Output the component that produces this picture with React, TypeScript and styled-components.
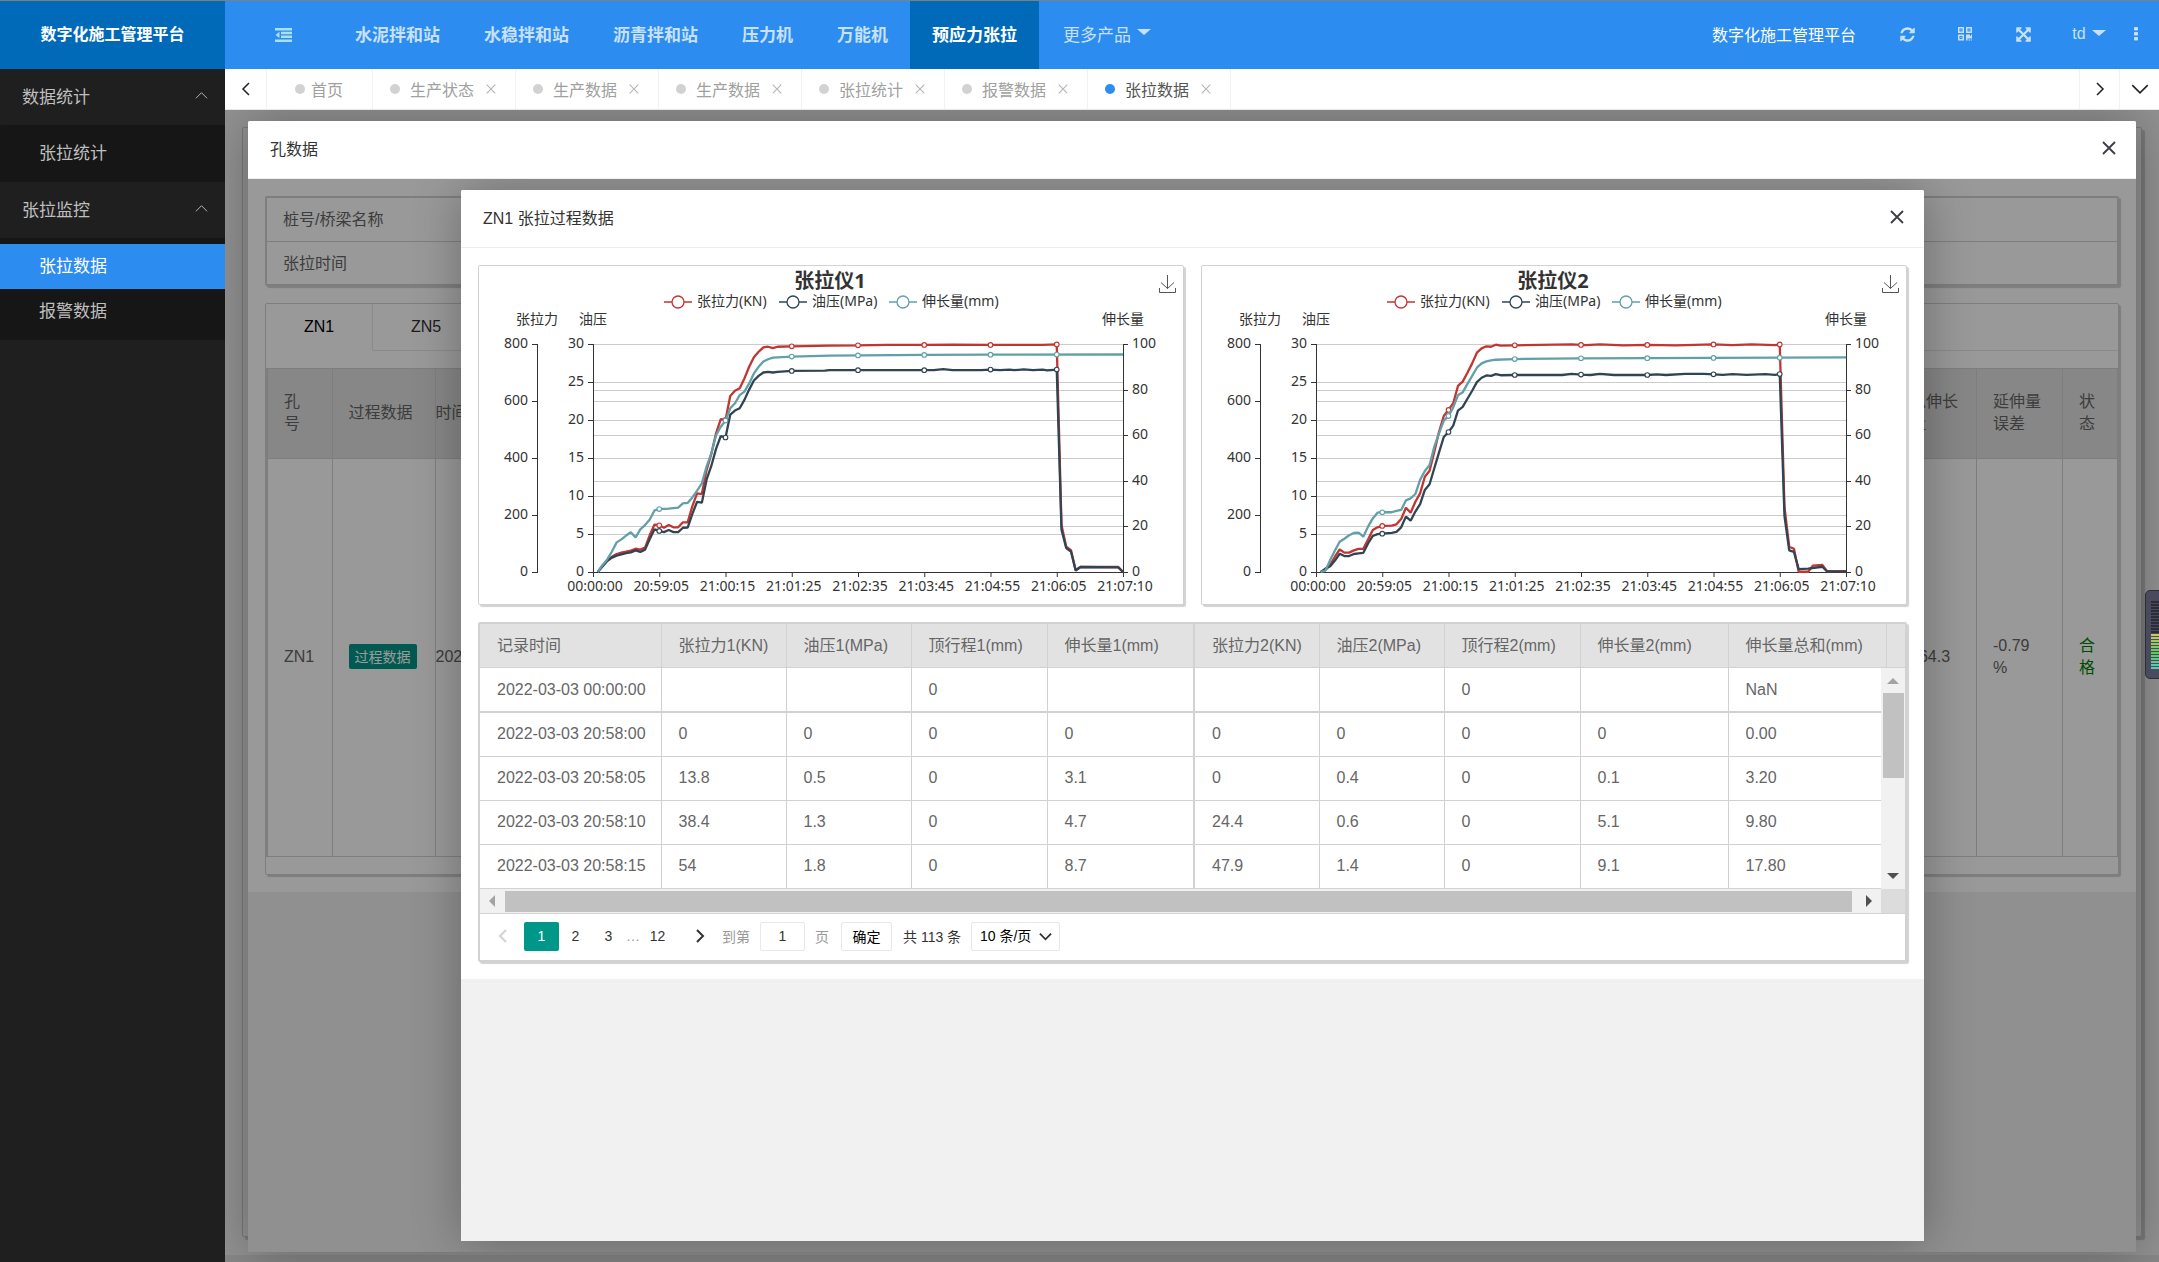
import React from "react";
import styled, { createGlobalStyle } from "styled-components";

const GlobalStyle = createGlobalStyle`
  * { box-sizing: border-box; }
  body { margin: 0; }
  body, button, input, select {
    font-family: "Liberation Sans", "Noto Sans CJK SC", sans-serif;
  }
  a { color: inherit; text-decoration: none; }
  button { margin: 0; padding: 0; border: 0; background: none; color: inherit; cursor: pointer; }
  h2, p, ul { margin: 0; padding: 0; }
  ul { list-style: none; }
  table { border-collapse: collapse; border-spacing: 0; }
  svg { display: block; }
`;

/* ---------- shell ---------- */

const Shell = styled.div`
  display: flex;
  height: 100vh;
  border-top: 1px solid #7f7f7f;
  overflow: hidden;
`;

const Sidebar = styled.aside`
  flex: 0 0 225px;
  background: #1f1f1f;
  color: #bfbfbf;
  font-size: 17px;
`;

const Logo = styled.div`
  display: flex;
  align-items: center;
  justify-content: center;
  height: 68px;
  padding-bottom: 4px;
  background: #006ab8;
  color: #fff;
  font-size: 16px;
  font-weight: 700;
`;

const GroupTitle = styled.button`
  display: flex;
  align-items: center;
  justify-content: space-between;
  width: 100%;
  height: 56px;
  padding: 0 17px 4px 22px;
  font-size: 17px;
`;

const SubMenu = styled.ul`
  padding: 6px 0;
  border-radius: 2px;
  background: #161616;
`;

const SubLink = styled.a<{ $active?: boolean }>`
  display: flex;
  align-items: center;
  height: 45px;
  padding: 0 39px 4px;
  background: ${(p) => (p.$active ? "#2d8cf0" : "transparent")};
  color: ${(p) => (p.$active ? "#fff" : "inherit")};
`;

const Column = styled.div`
  display: flex;
  flex: 1;
  flex-direction: column;
  min-width: 0;
`;

const TopBar = styled.header`
  display: flex;
  flex: 0 0 68px;
  background: #2d8cf0;
  color: #c7e1fb;
`;

const MenuToggle = styled.button`
  display: flex;
  align-items: center;
  justify-content: center;
  width: 108px;
  padding-left: 8px;
  color: #a9e0ea;
`;

const TopNav = styled.nav`
  display: flex;
  flex: 1;
`;

const TopLink = styled.a<{ $active?: boolean; $more?: boolean }>`
  display: flex;
  align-items: center;
  gap: 6px;
  padding: 0 ${(p) => (p.$more ? 24 : 22)}px 4px;
  background: ${(p) => (p.$active ? "#006ab8" : "transparent")};
  color: ${(p) => (p.$active ? "#fff" : "inherit")};
  font-size: 17px;
  font-weight: ${(p) => (p.$more ? 400 : 700)};
`;

const TopTools = styled.div`
  display: flex;
  align-items: center;
  padding: 0 13px 2px 0;
`;

const TopTitle = styled.span`
  margin-right: 22px;
  color: #fff;
  font-size: 16px;
`;

const ToolButton = styled.button<{ $wide?: boolean }>`
  display: flex;
  align-items: center;
  justify-content: center;
  gap: 6px;
  width: ${(p) => (p.$wide ? "74px" : "58px")};
  height: 66px;
  font-size: 16px;
`;

const MoreButton = styled.button`
  display: flex;
  align-items: center;
  justify-content: center;
  width: 20px;
  height: 66px;
`;

const Caret = styled.span`
  border: 7px solid transparent;
  border-top: 6px solid currentColor;
  border-bottom: 0;
  margin-bottom: 2px;
`;

const TabBar = styled.div`
  display: flex;
  flex: 0 0 41px;
  border-bottom: 1px solid #e8e8e8;
  background: #fff;
  color: #a0a0a0;
`;

const TabArrow = styled.button<{ $side: "left" | "right" }>`
  display: flex;
  align-items: center;
  justify-content: center;
  width: ${(p) => (p.$side === "left" ? 42 : 40)}px;
  border-${(p) => (p.$side === "left" ? "right" : "left")}: 1px solid #f2f2f2;
  color: #222;
`;

const TabList = styled.div`
  display: flex;
  flex: 1;
`;

const Tab = styled.div<{ $home?: boolean; $active?: boolean }>`
  display: flex;
  align-items: center;
  gap: ${(p) => (p.$home ? 6 : 10)}px;
  padding: ${(p) => (p.$home ? "0 29px 0 28px" : "0 19px 0 17px")};
  border-right: 1px solid #f2f2f2;
  color: ${(p) => (p.$active ? "#555" : "inherit")};
  font-size: 16px;
`;

const Dot = styled.span<{ $active?: boolean }>`
  width: 10px;
  height: 10px;
  border-radius: 50%;
  background: ${(p) => (p.$active ? "#2d8cf0" : "#d2d2d2")};
`;

const TabClose = styled.button`
  display: flex;
  margin-left: 2px;
  color: #b4b4b4;
`;

const Main = styled.main`
  display: flex;
  position: relative;
  flex: 1;
  flex-direction: column;
  min-height: 0;
  overflow: hidden;
  background: #f2f2f2;
`;

const PageCard = styled.section`
  flex: 1;
  margin: 17px 17px 18px;
  border: 1px solid #c8c8c8;
  border-radius: 2px;
  background: #f2f2f2;
  box-shadow: 3px 3px 1px #c8c8c8;
`;

const PageFoot = styled.div`
  flex: 0 0 7px;
  background: #e2e2e2;
`;

/* ---------- dialogs ---------- */

const Shade = styled.div`
  position: absolute;
  inset: 0;
  background: rgba(0, 0, 0, 0.4);
`;

const Dialog = styled.section<{ $inset: string }>`
  display: flex;
  position: absolute;
  inset: ${(p) => p.$inset};
  flex-direction: column;
  border-radius: 2px;
  background: #f1f1f1;
  box-shadow: 1px 1px 50px rgba(0, 0, 0, 0.3);
`;

const DialogHead = styled.header`
  display: flex;
  flex: 0 0 58px;
  align-items: center;
  justify-content: space-between;
  padding: 0 20px 4px 22px;
  border-bottom: 1px solid #eee;
  border-radius: 2px 2px 0 0;
  background: #fff;
  color: #333;
`;

const DialogTitle = styled.h2`
  font-size: 16px;
  font-weight: 400;
`;

const DialogClose = styled.button`
  color: #3c3c48;
`;

const DialogBody = styled.div`
  position: relative;
  flex: 1;
  min-height: 0;
  overflow: hidden;
  background: #f1f1f1;
`;

const Sheet = styled.div`
  display: flex;
  flex-direction: column;
  gap: 17px;
  padding: 17px;
  background: #fff;
`;

const Card = styled.section<{ $thick?: boolean }>`
  position: relative;
  border: ${(p) => (p.$thick ? "2px" : "1px")} solid #d2d2d2;
  border-radius: 2px;
  background: #fff;
  box-shadow: 2px 2px 1px #d2d2d2;
`;

/* ---------- hole data dialog ---------- */

const InfoTable = styled.table`
  width: 100%;
  color: #666;
  font-size: 16px;
  text-align: left;

  tr + tr { border-top: 1px solid #d2d2d2; }
  th { width: 200px; height: 43px; padding: 0 16px 2px; font-weight: 400; }
`;

const HoleTabs = styled.div`
  display: flex;
  height: 47px;
  margin-bottom: 17px;
`;

const HoleTab = styled.button<{ $active?: boolean }>`
  width: 107px;
  border-right: 1px solid ${(p) => (p.$active ? "#e6e6e6" : "transparent")};
  border-bottom: 1px solid ${(p) => (p.$active ? "transparent" : "#e6e6e6")};
  color: ${(p) => (p.$active ? "#000" : "#333")};
  font-size: 16px;
`;

const HoleTabRest = styled.div`
  flex: 1;
  border-bottom: 1px solid #e6e6e6;
`;

const HoleTable = styled.table`
  width: 100%;
  margin-bottom: 17px;
  table-layout: fixed;
  color: #666;
  font-size: 16px;
  line-height: 22px;
  text-align: left;

  th, td {
    padding: 0 16px 2px;
    border: 1px solid #d2d2d2;
    font-weight: 400;
  }
  tr > :first-child { border-left-width: 2px; }
  th { height: 90px; background: #e2e2e2; }
  td { height: 398px; }
  tr > .time { padding: 0 0 2px; }
`;

const Passed = styled.span`
  color: green;
`;

const ProcessButton = styled.button`
  width: 68px;
  height: 25px;
  padding-bottom: 2px;
  border-radius: 2px;
  background: #009688;
  color: #fff;
  font-size: 14px;
`;

/* ---------- charts ---------- */

const ChartRow = styled.div`
  display: grid;
  grid-template-columns: 1fr 1fr;
  gap: 17px;
`;

const ChartSvg = styled.svg`
  width: 100%;
  height: auto;
  font-family: "Noto Sans", "Noto Sans CJK SC", sans-serif;
  font-size: 14px;
  fill: #333;
`;

const SaveButton = styled.button`
  position: absolute;
  top: 9px;
  right: 7px;
`;

type Points = [number, number][];

const GRID = { left: 114, right: 644, top: 78, bottom: 306, steps: 112 };
const px = (i: number) => GRID.left + ((GRID.right - GRID.left) * i) / GRID.steps;
const py = (pct: number) => GRID.bottom - ((GRID.bottom - GRID.top) * pct) / 100;

const COLORS = { force: "#c23531", oil: "#2f4554", stretch: "#61a0a8" };

const times = ["00:00:00", "20:59:05", "21:00:15", "21:01:25", "21:02:35", "21:03:45", "21:04:55", "21:06:05", "21:07:10"];

const valueAt = (points: Points, i: number) => {
  const next = points.findIndex((p) => p[0] >= i);
  const [x1, y1] = points[next];
  if (x1 === i) return y1;
  const [x0, y0] = points[next - 1];
  return y0 + ((y1 - y0) * (i - x0)) / (x1 - x0);
};

const gauge1: Record<keyof typeof COLORS, Points> = {
  force: [[1, 0], [2, 2.6], [3, 5], [4, 6.7], [5, 7.9], [6, 8.5], [7, 8.9], [8, 9.4], [9, 10.2], [10, 9.8], [11, 10.7], [12, 16.2], [13, 20.8], [14, 20.5], [15, 19.4], [16, 20.6], [17, 19.6], [18, 19.6], [19, 21.8], [20, 21.8], [21, 28.9], [22, 34.5], [23, 34.2], [24, 44.7], [25, 51.8], [26, 60.8], [27, 67], [28, 66.7], [29, 77.2], [30, 79.5], [31, 80.6], [32, 84.9], [33, 90], [34, 94.2], [35, 96.6], [36, 98.5], [37, 98.8], [38, 98.2], [39, 98.8], [42, 99], [50, 99.3], [56, 99.4], [62, 99.6], [70, 99.6], [76, 99.7], [84, 99.6], [91, 99.6], [95, 99.6], [98, 99.8], [99, 20.6], [100, 11.1], [101, 9.6], [102, 0.6], [103, 2.2], [111, 2.2], [112, 0]],
  oil: [[1, 0], [2, 2.4], [3, 4.8], [4, 6.3], [5, 7.2], [6, 7.7], [7, 8.3], [8, 8.6], [9, 9.5], [10, 8.8], [11, 9.8], [12, 14.5], [13, 18.7], [14, 18], [15, 17.5], [16, 18.4], [17, 17.5], [18, 17.5], [19, 19.4], [20, 19.5], [21, 25.5], [22, 30.8], [23, 30.4], [24, 40.5], [25, 46.5], [26, 54], [27, 59.6], [28, 59], [29, 69], [30, 70.8], [31, 71.8], [32, 75.5], [33, 80], [34, 84], [35, 86], [36, 87.5], [37, 87.8], [38, 87.5], [39, 87.8], [42, 88.2], [49, 88.3], [50, 88.5], [72, 88.5], [74, 89], [76, 88.5], [82, 88.5], [84, 88.8], [86, 88.5], [88, 88.8], [89, 88.5], [91, 88.9], [93, 88.5], [95, 88.8], [96, 88.4], [98, 88.8], [99, 18.5], [100, 10.5], [101, 9], [102, 0.8], [103, 2.2], [111, 2], [112, 0]],
  stretch: [[1, 0], [2, 3], [3, 5.5], [4, 9], [5, 13], [6, 14.3], [7, 16], [8, 17.4], [9, 15.2], [10, 18.7], [11, 20.6], [12, 23], [13, 27], [14, 27.6], [16, 27.8], [18, 28.2], [19, 30.1], [20, 30.3], [21, 32.7], [22, 35.7], [23, 38.9], [24, 46.2], [25, 52], [26, 60], [27, 63.7], [28, 66.4], [29, 71.8], [30, 74], [31, 77.6], [32, 79.1], [33, 82.7], [34, 87.1], [35, 90], [36, 92.3], [37, 93.3], [38, 94], [42, 94.5], [50, 94.9], [70, 95.2], [84, 95.3], [112, 95.4]],
};

const gauge2: Record<keyof typeof COLORS, Points> = {
  force: [[1, 0], [2, 0.9], [3, 3.1], [4, 6.7], [5, 9.9], [6, 8.5], [7, 8.5], [8, 9.5], [9, 10.1], [10, 10.2], [11, 14.3], [12, 18.4], [13, 19.6], [14, 20.2], [16, 20.3], [17, 20.9], [18, 23.2], [19, 28.2], [20, 26], [21, 30.8], [22, 34.5], [23, 41.8], [24, 44.4], [25, 52.8], [26, 61.5], [27, 68.4], [28, 71.1], [29, 74], [30, 81.6], [31, 83.5], [32, 87.4], [33, 91.5], [34, 96.2], [35, 98.1], [36, 99], [37, 98.8], [38, 99.7], [39, 99.3], [42, 99.4], [54, 99.8], [57, 99.5], [60, 99.8], [65, 99.4], [70, 99.6], [76, 99.4], [84, 99.8], [88, 99.5], [92, 99.8], [97, 99.5], [98, 99.8], [99, 28.4], [100, 11.1], [101, 10.2], [102, 0.1], [104, 0.1], [105, 2.8], [107, 3.1], [108, 0.4], [112, 0.4]],
  oil: [[1, 0], [2, 1.5], [3, 2.5], [4, 5], [5, 8], [6, 7], [7, 7], [8, 7.9], [9, 8.2], [10, 8.4], [11, 12.5], [12, 15.8], [13, 16.6], [14, 16.8], [16, 17.2], [17, 17.6], [18, 19.6], [19, 24.3], [20, 22.5], [21, 26.5], [22, 29.8], [23, 36], [24, 38.5], [25, 45.5], [26, 52.5], [27, 59.2], [28, 61.4], [29, 64.2], [30, 70.8], [31, 72.4], [32, 76], [33, 79.5], [34, 83.3], [35, 85.2], [36, 86.2], [37, 86], [38, 86.8], [39, 86.3], [42, 86.4], [52, 86.4], [54, 86.9], [56, 86.6], [58, 86.4], [60, 86.9], [63, 86.4], [70, 86.4], [72, 86.7], [74, 86.4], [78, 86.9], [82, 86.9], [86, 86.5], [88, 86.8], [91, 86.5], [95, 86.8], [97, 86.5], [98, 86.8], [99, 24.5], [100, 9.5], [101, 8.8], [102, 1.3], [104, 1.5], [107, 2.3], [108, 0.2], [112, 0.2]],
  stretch: [[1, 0], [2, 0.6], [3, 5.3], [4, 9.4], [5, 13.3], [6, 14.6], [7, 16.1], [8, 17.1], [9, 17.3], [10, 15.5], [11, 19.9], [12, 23.5], [13, 26], [14, 26.2], [15, 26.3], [16, 26.2], [17, 26.8], [18, 27.2], [19, 31.4], [20, 32.3], [21, 34.2], [22, 40.4], [23, 44.3], [24, 46.9], [25, 55], [26, 60.8], [27, 66.4], [28, 68.4], [29, 72.2], [30, 77.5], [31, 78.8], [32, 82.5], [33, 86], [34, 89.6], [35, 91.5], [36, 92.4], [37, 92.8], [38, 93.1], [42, 93.4], [56, 93.7], [112, 94.1]],
};

const legend: { key: keyof typeof COLORS; label: string; x: number }[] = [
  { key: "force", label: "张拉力(KN)", x: 185 },
  { key: "oil", label: "油压(MPa)", x: 300 },
  { key: "stretch", label: "伸长量(mm)", x: 410 },
];

const axes = [
  { x: 58, name: "张拉力", max: 800, step: 200, side: -1 },
  { x: GRID.left, name: "油压", max: 30, step: 5, side: -1 },
  { x: GRID.right, name: "伸长量", max: 100, step: 20, side: 1 },
];

const ticksOf = (max: number, step: number) =>
  Array.from({ length: max / step + 1 }, (_, i) => i * step);

function Chart({ title, data }: { title: string; data: typeof gauge1 }) {
  return (
    <Card>
      <ChartSvg viewBox="0 0 704 338" role="img" aria-label={title}>
        <text x="351" y="22" textAnchor="middle" fontSize="20" fontWeight="700">{title}</text>
        {legend.map((l) => (
          <g key={l.key} stroke={COLORS[l.key]}>
            <line x1={l.x} x2={l.x + 28} y1="36" y2="36" strokeWidth="1.5" />
            <circle cx={l.x + 14} cy="36" r="6" fill="#fff" strokeWidth="1.3" />
            <text x={l.x + 33} y="40" stroke="none">{l.label}</text>
          </g>
        ))}
        {axes.map((a) => (
          <g key={a.name}>
            {ticksOf(a.max, a.step).map((v) => (
              <line key={v} x1={GRID.left} x2={GRID.right} y1={Math.round(py((v / a.max) * 100)) + 0.5} y2={Math.round(py((v / a.max) * 100)) + 0.5} stroke="#ccc" />
            ))}
          </g>
        ))}
        {axes.map((a) => (
          <g key={a.name}>
            <text x={a.x} y="58" textAnchor="middle">{a.name}</text>
            <line x1={a.x + 0.5} x2={a.x + 0.5} y1={GRID.top} y2={GRID.bottom + 1} stroke="#333" />
            {ticksOf(a.max, a.step).map((v) => {
              const y = Math.round(py((v / a.max) * 100)) + 0.5;
              return (
                <g key={v}>
                  <line x1={a.x} x2={a.x + a.side * 5} y1={y} y2={y} stroke="#333" />
                  <text x={a.x + a.side * 9} y={y + 3} textAnchor={a.side < 0 ? "end" : "start"}>{v}</text>
                </g>
              );
            })}
          </g>
        ))}
        <line x1={GRID.left} x2={GRID.right} y1={GRID.bottom + 0.5} y2={GRID.bottom + 0.5} stroke="#333" />
        {times.map((t, i) => {
          const x = px(i * 14);
          return (
            <g key={t}>
              <line x1={x + 0.5} x2={x + 0.5} y1={GRID.bottom} y2={GRID.bottom + 5} stroke="#333" />
              <text x={x + 2} y={GRID.bottom + 19} textAnchor="middle">{t}</text>
            </g>
          );
        })}
        {legend.map(({ key }) => (
          <g key={key} stroke={COLORS[key]}>
            <polyline points={data[key].map(([i, v]) => `${px(i)},${py(v)}`).join(" ")} fill="none" strokeWidth="2.3" strokeLinejoin="bevel" />
            {[14, 28, 42, 56, 70, 84, 98].map((i) => (
              <circle key={i} cx={px(i)} cy={py(valueAt(data[key], i))} r="2.3" fill="#fff" strokeWidth="1.1" />
            ))}
          </g>
        ))}
      </ChartSvg>
      <SaveButton aria-label="保存为图片">
        <svg width="17" height="18" viewBox="0 0 17 18" fill="none" stroke="#555">
          <path d="M8.500 0v13.500M2 7.500l6.500 6 6.500-6M.5 13v4.500h16V13" />
        </svg>
      </SaveButton>
    </Card>
  );
}

/* ---------- record table ---------- */

const RecordArea = styled.div`
  display: grid;
  grid-template-columns: minmax(0, 1fr) 24px;
  grid-template-rows: 44px 221px 24px;
  border-bottom: 1px solid #d2d2d2;
`;

const HeadViewport = styled.div`
  grid-column: 1 / 3;
  overflow: hidden;
  border-bottom: 1px solid #d2d2d2;
  background: #e2e2e2;
`;

const BodyViewport = styled.div`
  overflow: hidden;
`;

const RecordTable = styled.table`
  width: 1406px;
  table-layout: fixed;
  color: #666;
  font-size: 16px;
  text-align: left;

  th, td {
    height: 44px;
    padding: 0 0 0 17px;
    border-right: 1px solid #d2d2d2;
    border-bottom: 1px solid #d2d2d2;
    font-weight: 400;
    white-space: nowrap;
  }
  th { height: 43px; padding-bottom: 3px; border-bottom: 0; }
  tbody tr:first-child td { border-bottom-width: 2px; }
  tr > :nth-child(5) { border-right-width: 2px; }
`;

const VScroll = styled.div`
  display: flex;
  flex-direction: column;
  align-items: center;
  justify-content: space-between;
  padding: 10px 0;
  background: #f1f1f1;
`;

const VThumb = styled.div`
  width: 21px;
  height: 85px;
  margin: 9px 0 auto;
  background: #c1c1c1;
`;

const HScroll = styled.div`
  display: flex;
  align-items: center;
  padding: 0 9px;
  background: #f1f1f1;
`;

const HThumb = styled.div`
  flex: 1;
  height: 21px;
  margin: 0 14px 0 10px;
  background: #c1c1c1;
`;

const Arrow = styled.span<{ $dir: "up" | "down" | "left" | "right" }>`
  border: 6px solid transparent;
  ${(p) => p.$dir === "up" && "border-top: 0; border-bottom-color: #a3a3a3;"}
  ${(p) => p.$dir === "down" && "border-bottom: 0; border-top-color: #505050;"}
  ${(p) => p.$dir === "left" && "border-left: 0; border-right-color: #a3a3a3;"}
  ${(p) => p.$dir === "right" && "border-right: 0; border-left-color: #505050;"}
`;

const Corner = styled.div`
  background: #dcdcdc;
`;

const Pager = styled.nav`
  display: flex;
  align-items: center;
  height: 46px;
  padding: 0 0 2px 6px;
  color: #333;
  font-size: 14px;
`;

const PageButton = styled.button<{ $current?: boolean; $step?: "prev" | "next" }>`
  display: flex;
  align-items: center;
  justify-content: center;
  width: ${(p) => (p.$current ? 35 : 33)}px;
  height: 29px;
  margin-right: ${(p) => (p.$step === "prev" ? 5 : 0)}px;
  margin-left: ${(p) => (p.$step === "next" ? 9 : 0)}px;
  border-radius: 2px;
  background: ${(p) => (p.$current ? "#009688" : "transparent")};
  color: ${(p) => (p.$current ? "#fff" : "inherit")};
  font-size: 14px;

  &:disabled { color: #d2d2d2; }
`;

const PageDots = styled.span`
  width: 16px;
  color: #999;
  text-align: center;
`;

const SkipLabel = styled.label`
  display: flex;
  align-items: center;
  gap: 10px;
  margin: 0 12px 0 6px;
  color: #999;
`;

const SkipInput = styled.input`
  width: 45px;
  height: 29px;
  border: 1px solid #e8e8e8;
  border-radius: 2px;
  color: #333;
  font-size: 14px;
  text-align: center;
`;

const SkipButton = styled.button`
  width: 51px;
  height: 29px;
  border: 1px solid #e8e8e8;
  border-radius: 2px;
  color: #000;
  font-size: 14px;
`;

const Total = styled.span`
  width: 79px;
  padding-left: 11px;
  white-space: nowrap;
`;

const SizePicker = styled.div`
  display: grid;
  align-items: center;
  width: 89px;

  > * { grid-area: 1 / 1; }
  > svg { margin-right: 8px; justify-self: end; pointer-events: none; }
`;

const SizeSelect = styled.select`
  width: 100%;
  height: 29px;
  padding: 0 0 0 8px;
  border: 1px solid #e8e8e8;
  border-radius: 2px;
  background: #fff;
  color: #000;
  font-size: 14px;
  appearance: none;
`;

/* level meter docked to the window's right edge */
const Meter = styled.div`
  position: absolute;
  top: 480px;
  right: -2px;
  width: 16px;
  height: 89px;
  padding: 10px 3px 9px 5px;
  border: 1px solid #2b2d39;
  border-radius: 5px 0 0 5px;
  background: #474b5c;
`;

/* ---------- icons ---------- */

function Chevron({ dir, size = 14, weight = 1 }: { dir: "up" | "down" | "left" | "right"; size?: number; weight?: number }) {
  const path = { up: "M1 10l6-6 6 6", down: "M1 4l6 6 6-6", left: "M10 1L4 7l6 6", right: "M4 1l6 6-6 6" }[dir];
  return (
    <svg width={size} height={size} viewBox="0 0 14 14" fill="none" stroke="currentColor" strokeWidth={weight}>
      <path d={path} />
    </svg>
  );
}

function Cross({ size, weight }: { size: number; weight: number }) {
  return (
    <svg width={size} height={size} viewBox="0 0 14 14" fill="none" stroke="currentColor" strokeWidth={weight}>
      <path d="M1 1l12 12M13 1L1 13" />
    </svg>
  );
}

const OutdentIcon = () => (
  <svg width="17" height="14" viewBox="0 0 17 14" fill="currentColor">
    <path d="M0 0h17v2.500H0zM6 3.800h11v2.500H6zM6 7.600h11v2.500H6zM0 11.400h17V14H0zM4.500 3.800v6.300L.5 7z" />
  </svg>
);

const RefreshIcon = () => (
  <svg width="15" height="17" viewBox="0 0 1536 1792" fill="currentColor">
    <path d="M1511 1056q0 5-1 7-64 268-268 434.500t-478 166.500q-146 0-282.500-55t-243.500-157l-129 129q-19 19-45 19t-45-19-19-45v-448q0-26 19-45t45-19h448q26 0 45 19t19 45-19 45l-137 137q71 66 161 102t187 36q134 0 250-65t186-179q11-17 53-117 8-23 30-23h192q13 0 22.500 9.500t9.500 22.500zm25-800v448q0 26-19 45t-45 19h-448q-26 0-45-19t-19-45 19-45l138-138q-148-137-349-137-134 0-250 65t-186 179q-11 17-53 117-8 23-30 23h-199q-13 0-22.500-9.500t-9.500-22.500v-7q65-268 270-434.500t480-166.500q146 0 284 55.500t245 156.500l130-129q19-19 45-19t45 19 19 45z" />
  </svg>
);

const QrIcon = () => (
  <svg width="14" height="14" viewBox="0 0 14 14" fill="currentColor" fillRule="evenodd">
    <path d="M0 0h6v6H0zM1.500 1.500v3h3v-3zM2.500 2.500h1v1h-1zM8 0h6v6H8zM9.500 1.500v3h3v-3zM10.500 2.500h1v1h-1zM0 7.500h6v6H0zM1.500 9v3h3V9zM2.500 10h1v1h-1zM8 7.500h4v1.500h1V7.500h1v4h-4.500v2H8zM10.500 12.500h1.500v1h-1.500zM12.800 12.500H14v1h-1.200z" />
  </svg>
);

const ExpandIcon = () => (
  <svg width="15" height="17" viewBox="0 0 1536 1792" fill="currentColor">
    <path d="M1283 541l-355 355 355 355 144-144q29-31 70-14 39 17 39 59v448q0 26-19 45t-45 19h-448q-42 0-59-40-17-39 14-69l144-144-355-355-355 355 144 144q31 30 14 69-17 40-59 40h-448q-26 0-45-19t-19-45v-448q0-42 40-59 39-17 69 14l144 144 355-355-355-355-144 144q-19 19-45 19-12 0-24-5-40-17-40-59v-448q0-26 19-45t45-19h448q42 0 59 40 17 39-14 69l-144 144 355 355 355-355-144-144q-31-30-14-69 17-40 59-40h448q26 0 45 19t19 45v448q0 42-39 59-13 5-25 5-26 0-45-19z" />
  </svg>
);

const DotsIcon = () => (
  <svg width="4" height="14" viewBox="0 0 4 14" fill="currentColor">
    <rect width="4" height="3.500" rx="1" />
    <rect y="5" width="4" height="3.500" rx="1" />
    <rect y="10" width="4" height="3.500" rx="1" />
  </svg>
);

function MeterBars() {
  const bars = Array.from({ length: 23 }, (_, i) => i);
  const fill = (i: number) => (i < 11 ? "#2a2c38" : `hsl(${60 + (i - 11) * 10}, 50%, 58%)`);
  return (
    <svg width="8" height="69" viewBox="0 0 8 69">
      {bars.map((i) => (
        <rect key={i} y={i * 3} width="8" height="2" fill={fill(i)} />
      ))}
    </svg>
  );
}

/* ---------- data ---------- */

const menu = [
  { title: "数据统计", items: ["张拉统计"] },
  { title: "张拉监控", items: ["张拉数据", "报警数据"] },
];

const products = ["水泥拌和站", "水稳拌和站", "沥青拌和站", "压力机", "万能机", "预应力张拉"];
const openTabs = ["生产状态", "生产数据", "生产数据", "张拉统计", "报警数据", "张拉数据"];

const columns = [
  { label: "记录时间", width: 181 },
  { label: "张拉力1(KN)", width: 125 },
  { label: "油压1(MPa)", width: 125 },
  { label: "顶行程1(mm)", width: 136 },
  { label: "伸长量1(mm)", width: 147 },
  { label: "张拉力2(KN)", width: 125 },
  { label: "油压2(MPa)", width: 125 },
  { label: "顶行程2(mm)", width: 136 },
  { label: "伸长量2(mm)", width: 148 },
  { label: "伸长量总和(mm)", width: 158 },
];

const records = [
  ["2022-03-03 00:00:00", "", "", "0", "", "", "", "0", "", "NaN"],
  ["2022-03-03 20:58:00", "0", "0", "0", "0", "0", "0", "0", "0", "0.00"],
  ["2022-03-03 20:58:05", "13.8", "0.5", "0", "3.1", "0", "0.4", "0", "0.1", "3.20"],
  ["2022-03-03 20:58:10", "38.4", "1.3", "0", "4.7", "24.4", "0.6", "0", "5.1", "9.80"],
  ["2022-03-03 20:58:15", "54", "1.8", "0", "8.7", "47.9", "1.4", "0", "9.1", "17.80"],
];

const Cols = () => (
  <colgroup>
    {columns.map((c) => (
      <col key={c.label} width={c.width} />
    ))}
  </colgroup>
);

/* ---------- sections ---------- */

function Records() {
  return (
    <Card $thick>
      <RecordArea>
        <HeadViewport>
          <RecordTable>
            <Cols />
            <thead>
              <tr>
                {columns.map((c) => (
                  <th key={c.label}>{c.label}</th>
                ))}
              </tr>
            </thead>
          </RecordTable>
        </HeadViewport>
        <BodyViewport>
          <RecordTable>
            <Cols />
            <tbody>
              {records.map((r) => (
                <tr key={r[0]}>
                  {r.map((cell, i) => (
                    <td key={i}>{cell}</td>
                  ))}
                </tr>
              ))}
            </tbody>
          </RecordTable>
        </BodyViewport>
        <VScroll>
          <Arrow $dir="up" />
          <VThumb />
          <Arrow $dir="down" />
        </VScroll>
        <HScroll>
          <Arrow $dir="left" />
          <HThumb />
          <Arrow $dir="right" />
        </HScroll>
        <Corner />
      </RecordArea>
      <Pager aria-label="分页">
        <PageButton $step="prev" disabled aria-label="上一页"><Chevron dir="left" weight={2} /></PageButton>
        <PageButton $current>1</PageButton>
        <PageButton>2</PageButton>
        <PageButton>3</PageButton>
        <PageDots>…</PageDots>
        <PageButton>12</PageButton>
        <PageButton $step="next" aria-label="下一页"><Chevron dir="right" weight={2} /></PageButton>
        <SkipLabel>
          到第
          <SkipInput defaultValue="1" />
          页
        </SkipLabel>
        <SkipButton>确定</SkipButton>
        <Total>共 113 条</Total>
        <SizePicker>
          <SizeSelect aria-label="每页条数" defaultValue="10">
            <option value="10">10 条/页</option>
          </SizeSelect>
          <Chevron dir="down" size={13} weight={2} />
        </SizePicker>
      </Pager>
    </Card>
  );
}

function HoleData() {
  return (
    <Sheet>
      <Card $thick>
        <InfoTable>
          <tbody>
            <tr><th scope="row">桩号/桥梁名称</th><td /></tr>
            <tr><th scope="row">张拉时间</th><td /></tr>
          </tbody>
        </InfoTable>
      </Card>
      <Card>
        <HoleTabs>
          <HoleTab $active>ZN1</HoleTab>
          <HoleTab>ZN5</HoleTab>
          <HoleTabRest />
        </HoleTabs>
        <HoleTable>
          <colgroup>
            <col width="65" />
            <col width="103" />
            <col />
            <col width="83" />
            <col width="86" />
            <col width="55" />
          </colgroup>
          <thead>
            <tr>
              <th>孔<br />号</th>
              <th>过程数据</th>
              <th className="time">时间</th>
              <th>总伸长量</th>
              <th>延伸量误差</th>
              <th>状<br />态</th>
            </tr>
          </thead>
          <tbody>
            <tr>
              <td>ZN1</td>
              <td><ProcessButton>过程数据</ProcessButton></td>
              <td className="time">2022</td>
              <td>164.3</td>
              <td>-0.79 %</td>
              <td><Passed>合<br />格</Passed></td>
            </tr>
          </tbody>
        </HoleTable>
      </Card>
    </Sheet>
  );
}

export default function App() {
  return (
    <Shell>
      <GlobalStyle />
      <Sidebar>
        <Logo>数字化施工管理平台</Logo>
        {menu.map((group) => (
          <div key={group.title}>
            <GroupTitle>
              {group.title}
              <Chevron dir="up" size={13} />
            </GroupTitle>
            <SubMenu>
              {group.items.map((item) => (
                <li key={item}>
                  <SubLink href="#" $active={item === "张拉数据"}>{item}</SubLink>
                </li>
              ))}
            </SubMenu>
          </div>
        ))}
      </Sidebar>
      <Column>
        <TopBar>
          <MenuToggle aria-label="折叠菜单"><OutdentIcon /></MenuToggle>
          <TopNav>
            {products.map((p) => (
              <TopLink key={p} href="#" $active={p === "预应力张拉"}>{p}</TopLink>
            ))}
            <TopLink href="#" $more>更多产品<Caret /></TopLink>
          </TopNav>
          <TopTools>
            <TopTitle>数字化施工管理平台</TopTitle>
            <ToolButton aria-label="刷新"><RefreshIcon /></ToolButton>
            <ToolButton aria-label="二维码"><QrIcon /></ToolButton>
            <ToolButton aria-label="全屏"><ExpandIcon /></ToolButton>
            <ToolButton $wide>td<Caret /></ToolButton>
            <MoreButton aria-label="更多"><DotsIcon /></MoreButton>
          </TopTools>
        </TopBar>
        <TabBar>
          <TabArrow $side="left" aria-label="向左"><Chevron dir="left" weight={1.5} /></TabArrow>
          <TabList>
            <Tab $home><Dot />首页</Tab>
            {openTabs.map((t, i) => {
              const active = i === openTabs.length - 1;
              return (
                <Tab key={i} $active={active}>
                  <Dot $active={active} />
                  {t}
                  <TabClose aria-label="关闭"><Cross size={10} weight={1.5} /></TabClose>
                </Tab>
              );
            })}
          </TabList>
          <TabArrow $side="right" aria-label="向右"><Chevron dir="right" weight={1.5} /></TabArrow>
          <TabArrow $side="right" aria-label="标签操作"><Chevron dir="down" size={18} weight={1.2} /></TabArrow>
        </TabBar>
        <Main>
          <PageCard />
          <PageFoot />
          <Shade />
          <Dialog $inset="11px 23px 10px" role="dialog" aria-label="孔数据">
            <DialogHead>
              <DialogTitle>孔数据</DialogTitle>
              <DialogClose aria-label="关闭"><Cross size={14} weight={1.8} /></DialogClose>
            </DialogHead>
            <DialogBody>
              <HoleData />
              <Shade />
              <Dialog $inset="11px 212px 11px 213px" role="dialog" aria-label="张拉过程数据">
                <DialogHead>
                  <DialogTitle>ZN1 张拉过程数据</DialogTitle>
                  <DialogClose aria-label="关闭"><Cross size={14} weight={1.8} /></DialogClose>
                </DialogHead>
                <DialogBody>
                  <Sheet>
                    <ChartRow>
                      <Chart title="张拉仪1" data={gauge1} />
                      <Chart title="张拉仪2" data={gauge2} />
                    </ChartRow>
                    <Records />
                  </Sheet>
                </DialogBody>
              </Dialog>
            </DialogBody>
          </Dialog>
          <Meter><MeterBars /></Meter>
        </Main>
      </Column>
    </Shell>
  );
}
